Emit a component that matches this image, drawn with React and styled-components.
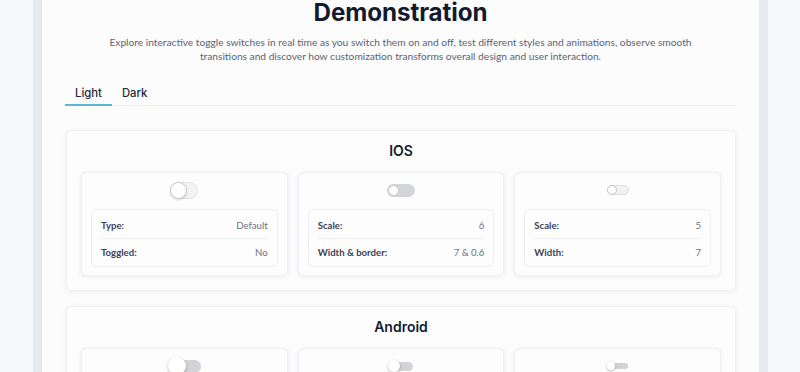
import React from 'react';
import styled, { createGlobalStyle } from 'styled-components';

const GlobalStyle = createGlobalStyle`
  body {
    margin: 0;
    background-color: #f8f9fb;
    font-family: 'Lato', 'Liberation Sans', sans-serif;
  }
`;

const Page = styled.div`
  padding: 0 32px 0 33px;
`;

const Frame = styled.div`
  border-left: 9px solid #e5eaf0;
  border-right: 9px solid #e5eaf0;
  background-color: #fcfcfd;
  padding: 0 23px 30px 23px;
  min-height: 372px;
`;

const Header = styled.header`
  text-align: center;
`;

const Title = styled.h1`
  margin: 0;
  font-family: 'Inter', sans-serif;
  font-size: 24.2px;
  line-height: 26px;
  font-weight: 700;
  color: #141b2d;
  letter-spacing: -0.1px;
`;

const Subtitle = styled.p`
  margin: 9px auto 0;
  max-width: 600px;
  font-size: 10.2px;
  line-height: 14px;
  color: #5b6376;
`;

const TabList = styled.div`
  display: flex;
  margin-top: 20px;
  border-bottom: 1px solid #eceff3;
`;

const Tab = styled.button`
  background: none;
  border: none;
  border-bottom: 2px solid ${p => (p.$active ? '#5bb8d6' : 'transparent')};
  margin-bottom: -1px;
  padding: 3px 10px 4px;
  font-family: 'Inter', sans-serif;
  font-size: 11.3px;
  line-height: 14px;
  font-weight: 500;
  color: #1f2937;
  cursor: pointer;
`;

const Section = styled.section`
  margin: 24px 0 0 1px;
  background-color: #fdfdfe;
  border: 1px solid #f0f1f4;
  border-radius: 6px;
  box-shadow: 0 1px 6px rgba(20, 30, 60, 0.06);
  padding: 11px 14px 14px;

  & + & {
    margin-top: 15px;
  }
`;

const SectionTitle = styled.h2`
  margin: 0 0 12px;
  text-align: center;
  font-family: 'Inter', sans-serif;
  font-size: 14px;
  line-height: 18px;
  font-weight: 600;
  color: #141b2d;
`;

const Grid = styled.div`
  display: grid;
  grid-template-columns: repeat(3, 1fr);
  gap: 10px;
`;

const DemoCard = styled.div`
  background-color: #fdfdfe;
  border: 1px solid #eff0f3;
  border-radius: 5px;
  box-shadow: 0 1px 5px rgba(20, 30, 60, 0.07);
  padding: 8px 9px 8px;
`;

const ToggleSlot = styled.div`
  display: flex;
  justify-content: center;
  align-items: center;
  height: 18px;
  margin-bottom: 10px;
`;

const IosTrack = styled.div`
  position: relative;
  box-sizing: border-box;
  width: ${p => p.$w}px;
  height: ${p => p.$h}px;
  border-radius: ${p => p.$h}px;
  background-color: ${p => p.$bg};
  border: ${p => p.$border};
`;

const IosKnob = styled.div`
  position: absolute;
  box-sizing: border-box;
  top: ${p => p.$top}px;
  left: ${p => p.$left}px;
  width: ${p => p.$size}px;
  height: ${p => p.$size}px;
  border-radius: 50%;
  background-color: #ffffff;
  border: ${p => p.$border};
  box-shadow: ${p => p.$shadow};
`;

const AndroidSwitch = styled.div`
  position: relative;
  display: flex;
  align-items: center;
  justify-content: flex-end;
  width: ${p => p.$span}px;
  height: ${p => p.$size}px;
`;

const AndroidTrack = styled.div`
  width: ${p => p.$w}px;
  height: ${p => p.$h}px;
  border-radius: ${p => p.$h}px;
  background-color: #d2d3d6;
`;

const AndroidKnob = styled.div`
  position: absolute;
  top: 0;
  left: 0;
  width: ${p => p.$size}px;
  height: ${p => p.$size}px;
  border-radius: 50%;
  background-color: #ffffff;
  box-shadow: 0 1px 3px rgba(0, 0, 0, 0.28);
`;

const Info = styled.div`
  border: 1px solid #eceef2;
  border-radius: 5px;
  background-color: #fdfdfe;
  padding: 2px 9px 1px;
`;

const Row = styled.div`
  display: flex;
  justify-content: space-between;
  align-items: center;
  height: 26px;
  font-size: 9.6px;

  & + & {
    border-top: 1px solid #eceef2;
  }
`;

const Label = styled.span`
  font-weight: 700;
  color: #3b4256;
`;

const Value = styled.span`
  color: #6b7282;
`;

const iosToggles = [
  {
    track: { $w: 28, $h: 17, $bg: '#f3f3f5', $border: '1px solid #e2e3e6' },
    knob: { $size: 17, $top: -1, $left: -1, $border: '1px solid #c9cacd', $shadow: '0 1px 2px rgba(0,0,0,0.15)' },
    rows: [['Type:', 'Default'], ['Toggled:', 'No']],
  },
  {
    track: { $w: 28, $h: 13, $bg: '#d4d5d8', $border: 'none' },
    knob: { $size: 11, $top: 1, $left: 1, $border: '1px solid #c3c4c7', $shadow: 'none' },
    rows: [['Scale:', '6'], ['Width & border:', '7 & 0.6']],
  },
  {
    track: { $w: 22, $h: 10, $bg: '#f1f1f3', $border: '1px solid #dcdde0' },
    knob: { $size: 10, $top: -1, $left: -1, $border: '1px solid #c5c6c9', $shadow: 'none' },
    rows: [['Scale:', '5'], ['Width:', '7']],
  },
];

const androidToggles = [
  { span: 33, w: 27, h: 13, size: 18 },
  { span: 25, w: 21, h: 9, size: 12 },
  { span: 21, w: 17, h: 6, size: 8 },
];

const InfoBox = ({ rows }) => (
  <Info>
    {rows.map(([label, value]) => (
      <Row key={label}>
        <Label>{label}</Label>
        <Value>{value}</Value>
      </Row>
    ))}
  </Info>
);

const App = () => {
  return (
    <>
      <GlobalStyle />
      <Page>
        <Frame>
          <Header>
            <Title>Demonstration</Title>
            <Subtitle>
              Explore interactive toggle switches in real time as you switch them on and off, test different styles and
              animations, observe smooth transitions and discover how customization transforms overall design and user
              interaction.
            </Subtitle>
          </Header>

          <TabList>
            <Tab $active>Light</Tab>
            <Tab>Dark</Tab>
          </TabList>

          <Section>
            <SectionTitle>IOS</SectionTitle>
            <Grid>
              {iosToggles.map((t, i) => (
                <DemoCard key={i}>
                  <ToggleSlot>
                    <IosTrack {...t.track}>
                      <IosKnob {...t.knob} />
                    </IosTrack>
                  </ToggleSlot>
                  <InfoBox rows={t.rows} />
                </DemoCard>
              ))}
            </Grid>
          </Section>

          <Section>
            <SectionTitle>Android</SectionTitle>
            <Grid>
              {androidToggles.map((t, i) => (
                <DemoCard key={i}>
                  <ToggleSlot>
                    <AndroidSwitch $span={t.span} $size={t.size}>
                      <AndroidTrack $w={t.w} $h={t.h} />
                      <AndroidKnob $size={t.size} />
                    </AndroidSwitch>
                  </ToggleSlot>
                  <InfoBox rows={[['Type:', 'Default'], ['Toggled:', 'No']]} />
                </DemoCard>
              ))}
            </Grid>
          </Section>
        </Frame>
      </Page>
    </>
  );
};

export default App;
